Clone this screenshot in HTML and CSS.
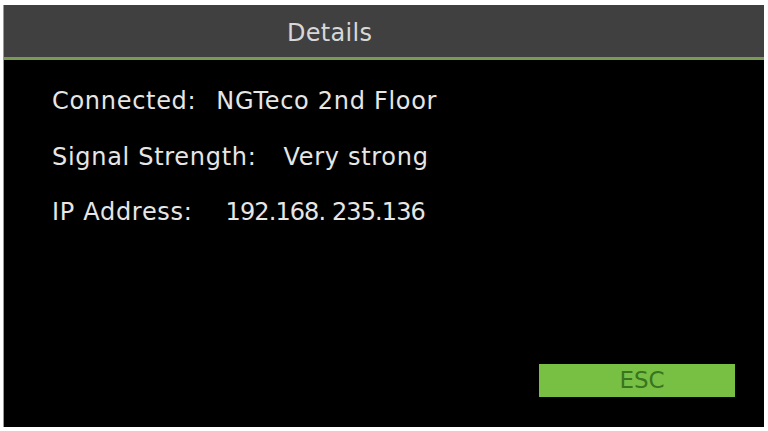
FILE: index.html
```html
<!DOCTYPE html>
<html lang="en">
<head>
    <meta charset="UTF-8">
    <meta name="viewport" content="width=device-width, initial-scale=1.0">
    <title>Details</title>
    <link rel="stylesheet" href="styles.css">
</head>
<body>
    <div class="screen">
        <header class="title-bar">
            <h1>Details</h1>
        </header>
        <div class="details">
            <div class="row row-connected">
                <span class="label">Connected:</span>
                <span class="value">NGTeco 2nd Floor</span>
            </div>
            <div class="row row-signal">
                <span class="label">Signal Strength:</span>
                <span class="value">Very strong</span>
            </div>
            <div class="row row-ip">
                <span class="label">IP Address:</span>
                <span class="value value-ip">192.168. 235.136</span>
            </div>
        </div>
        <div class="actions">
            <button class="esc">ESC</button>
        </div>
    </div>
</body>
</html>
```

FILE: styles.css
```css
body {
    margin: 0;
    padding: 0;
    background: #fff;
    font-family: 'DejaVu Sans', sans-serif;
}
.screen {
    margin: 5px 4px 4px 3px;
    height: 422px;
    background: #000;
    display: flex;
    flex-direction: column;
    border-left: 1px solid #999;
}
.title-bar {
    height: 55px;
    box-sizing: border-box;
    background: #404040;
    border-bottom: 3px solid #7d9a55;
    display: flex;
    align-items: center;
    padding: 3px 0 0 283px;
}
.title-bar h1 {
    margin: 0;
    font-size: 24px;
    font-weight: 400;
    color: #d8d8d8;
    letter-spacing: 0.3px;
}
.details {
    padding: 25px 0 0 48px;
    display: flex;
    flex-direction: column;
    gap: 23.5px;
}
.row {
    display: flex;
    font-size: 24px;
    line-height: 32px;
    color: #e6e6e6;
    letter-spacing: 0.7px;
}
.row-connected {
    gap: 20px;
}
.row-signal {
    gap: 27px;
}
.row-ip {
    gap: 33px;
}
.value-ip {
    letter-spacing: -0.9px;
}
.actions {
    margin-top: auto;
    display: flex;
    justify-content: flex-end;
    padding: 0 29px 30px 0;
}
.esc {
    width: 196px;
    height: 33px;
    border: none;
    border-radius: 0;
    background: #78c044;
    color: #3a7420;
    font-family: 'DejaVu Sans', sans-serif;
    font-size: 23px;
    padding: 0 0 0 10px;
    line-height: 33px;
}
```
